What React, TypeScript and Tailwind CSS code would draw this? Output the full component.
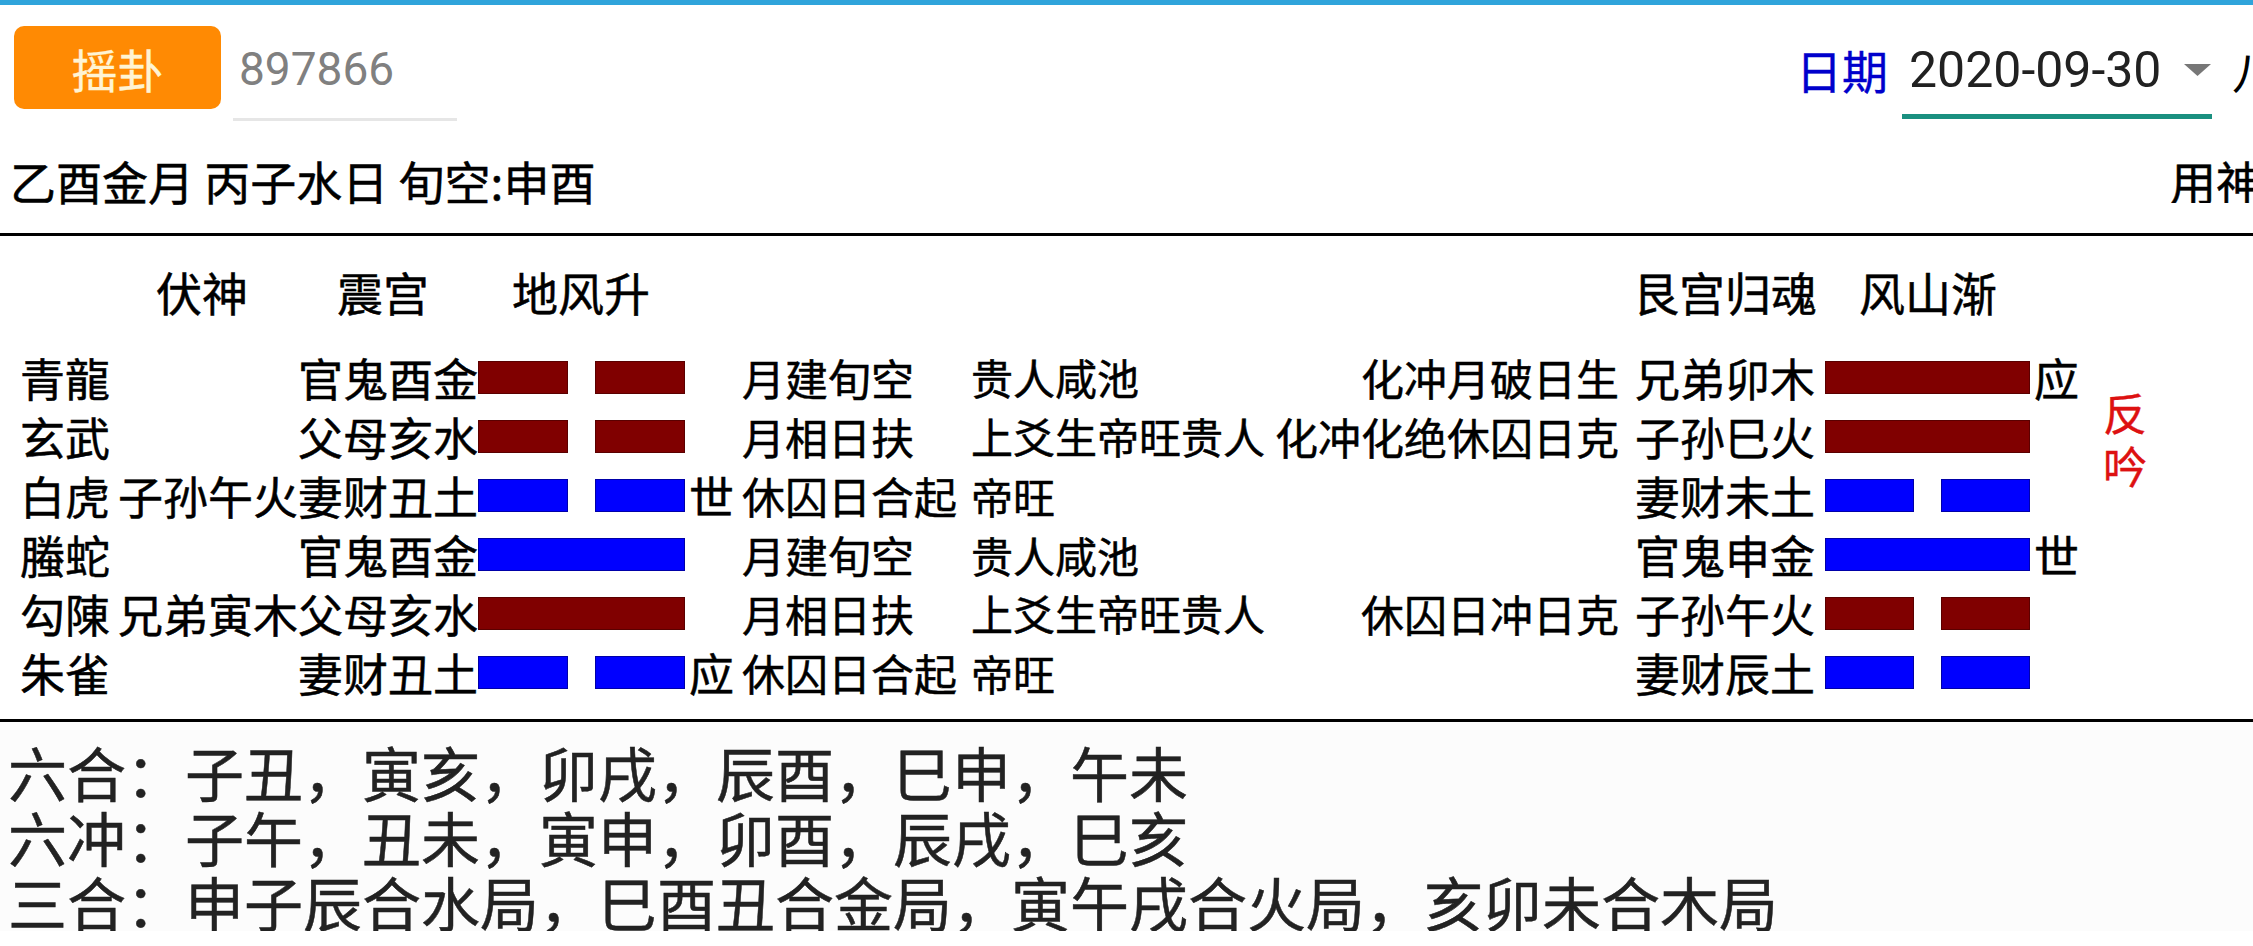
import React from "react";

type Yao = {
  shen: string;
  fu: string;
  ben: string;
  benYang: boolean;
  benRed: boolean;
  benMark: string;
  wang: string;
  sha: string;
  bianInfo: string;
  bian: string;
  bianYang: boolean;
  bianRed: boolean;
  bianMark: string;
};

const rows: Yao[] = [
  { shen: "青龍", fu: "", ben: "官鬼酉金", benYang: false, benRed: true, benMark: "", wang: "月建旬空", sha: "贵人咸池", bianInfo: "化冲月破日生", bian: "兄弟卯木", bianYang: true, bianRed: true, bianMark: "应" },
  { shen: "玄武", fu: "", ben: "父母亥水", benYang: false, benRed: true, benMark: "", wang: "月相日扶", sha: "上爻生帝旺贵人", bianInfo: "化冲化绝休囚日克", bian: "子孙巳火", bianYang: true, bianRed: true, bianMark: "" },
  { shen: "白虎", fu: "子孙午火", ben: "妻财丑土", benYang: false, benRed: false, benMark: "世", wang: "休囚日合起", sha: "帝旺", bianInfo: "", bian: "妻财未土", bianYang: false, bianRed: false, bianMark: "" },
  { shen: "螣蛇", fu: "", ben: "官鬼酉金", benYang: true, benRed: false, benMark: "", wang: "月建旬空", sha: "贵人咸池", bianInfo: "", bian: "官鬼申金", bianYang: true, bianRed: false, bianMark: "世" },
  { shen: "勾陳", fu: "兄弟寅木", ben: "父母亥水", benYang: true, benRed: true, benMark: "", wang: "月相日扶", sha: "上爻生帝旺贵人", bianInfo: "休囚日冲日克", bian: "子孙午火", bianYang: false, bianRed: true, bianMark: "" },
  { shen: "朱雀", fu: "", ben: "妻财丑土", benYang: false, benRed: false, benMark: "应", wang: "休囚日合起", sha: "帝旺", bianInfo: "", bian: "妻财辰土", bianYang: false, bianRed: false, bianMark: "" },
];

function Bar({ yang, red, width, seg }: { yang: boolean; red: boolean; width: string; seg: string }) {
  const color = red ? "bg-[#800000] border-[#5a0000]" : "bg-[#0000ff] border-[#0000a8]";
  if (yang) {
    return <div className={`${width} h-[33px] shrink-0 border ${color}`} />;
  }
  return (
    <div className={`${width} h-[33px] shrink-0 flex justify-between`}>
      <div className={`${seg} h-full border ${color}`} />
      <div className={`${seg} h-full border ${color}`} />
    </div>
  );
}

export default function App() {
  return (
    <div className="w-[2253px] h-[946px] overflow-hidden bg-white text-black font-['Noto_Sans_CJK_SC','Noto_Sans',sans-serif]">
      <div className="h-[5px] bg-[#2fa4db]" />

      {/* header row */}
      <div className="flex items-start h-[125px] whitespace-nowrap overflow-hidden">
        <button className="ml-[14px] mt-[21px] w-[207px] h-[83px] shrink-0 rounded-[10px] bg-[#ff8a03] text-[#fff4d4] text-[46px] leading-none flex items-center justify-center [-webkit-text-stroke:0.4px_#fff4d4]">
          摇卦
        </button>
        <div className="ml-[12px] mt-[21px] w-[224px] h-[95px] shrink-0 border-b-[3px] border-[#e6e6e6] flex items-center pl-[6px] pb-[6px]">
          <span className="font-['Roboto',sans-serif] text-[46px] leading-none text-[#808080]">897866</span>
        </div>
        <div className="ml-auto w-[457px] shrink-0 mt-[21px] h-[95px] flex items-start overflow-hidden">
          <span className="mt-[20px] text-[46px] leading-none text-[#0000cc] shrink-0 [-webkit-text-stroke:0.4px_#0000cc]">日期</span>
          <div className="ml-[14px] w-[310px] h-[93px] shrink-0 border-b-[5px] border-[#1a9080] flex items-start">
            <span className="mt-[19px] ml-[7px] font-['Roboto',sans-serif] text-[50px] leading-none text-[#212121]">2020-09-30</span>
            <svg className="mt-[38px] ml-auto mr-[1px]" width="27" height="12" viewBox="0 0 27 12">
              <polygon points="0,0 27,0 13.5,12" fill="#777777" />
            </svg>
          </div>
          <span className="ml-[20px] mt-[20px] text-[46px] leading-none shrink-0">八字</span>
        </div>
      </div>

      {/* info row */}
      <div className="flex items-center h-[103px] pb-[4px] text-[46px] leading-none whitespace-nowrap [-webkit-text-stroke:0.5px_black]">
        <span className="ml-[10px]">乙酉金月 丙子水日 旬空:申酉</span>
        <span className="ml-auto w-[83px] overflow-hidden shrink-0">用神</span>
      </div>

      {/* hexagram section */}
      <div className="border-t-[3px] border-black h-[486px] leading-none whitespace-nowrap [-webkit-text-stroke:0.5px_black]">
        <div className="flex items-center h-[112px] pb-[2px] text-[46px]">
          <span className="ml-[156px] w-[92px]">伏神</span>
          <span className="ml-[89px] w-[92px]">震宫</span>
          <span className="ml-[83px] w-[138px]">地风升</span>
          <span className="ml-[983px] w-[184px]">艮宫归魂</span>
          <span className="ml-[42px]">风山渐</span>
        </div>
        <div className="flex">
          <div className="flex flex-col">
            {rows.map((r, i) => (
              <div key={i} className="flex items-center h-[59px]">
                <span className="ml-[20px] w-[98px] shrink-0 text-[45px]">{r.shen}</span>
                <span className="w-[180px] shrink-0 text-[45px]">{r.fu}</span>
                <span className="w-[180px] shrink-0 text-[45px]">{r.ben}</span>
                <Bar yang={r.benYang} red={r.benRed} width="w-[207px]" seg="w-[90px]" />
                <span className="ml-[4px] w-[45px] shrink-0 text-[45px]">{r.benMark}</span>
                <span className="ml-[8px] w-[229px] shrink-0 text-[43px]">{r.wang}</span>
                <div className="w-[648px] shrink-0 flex justify-between">
                  <span className="text-[42px]">{r.sha}</span>
                  <span className="text-[43px]">{r.bianInfo}</span>
                </div>
                <span className="ml-[16px] w-[180px] shrink-0 text-[45px]">{r.bian}</span>
                <div className="ml-[10px]">
                  <Bar yang={r.bianYang} red={r.bianRed} width="w-[205px]" seg="w-[89px]" />
                </div>
                <span className="ml-[4px] w-[45px] shrink-0 text-[45px]">{r.bianMark}</span>
              </div>
            ))}
          </div>
          <div className="ml-[24px] pt-[38px] flex flex-col text-[#dd1111] text-[44px] leading-[53px] [-webkit-text-stroke:0.4px_#dd1111]">
            <span>反</span>
            <span>吟</span>
          </div>
        </div>
      </div>

      {/* bottom */}
      <div className="border-t-[3px] border-black h-[212px] overflow-hidden bg-[#fcfcfc]">
        <div className="h-[209px] overflow-hidden pt-[17px] pl-[8px] text-[59px] leading-[65px] text-[#222222] whitespace-nowrap [-webkit-text-stroke:0.5px_#222222]">
          <div>六合：子丑，寅亥，卯戌，辰酉，巳申，午未</div>
          <div>六冲：子午，丑未，寅申，卯酉，辰戌，巳亥</div>
          <div>三合：申子辰合水局，巳酉丑合金局，寅午戌合火局，亥卯未合木局</div>
        </div>
      </div>
    </div>
  );
}
